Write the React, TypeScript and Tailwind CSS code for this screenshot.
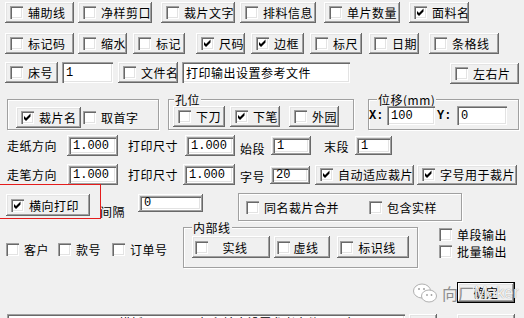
import React from 'react';

// classic win32 bevels
const raised =
  'bg-[#f0f0f0] shadow-[inset_-1px_-1px_0_#696969,inset_1px_1px_0_#ffffff,inset_-2px_-2px_0_#a0a0a0,inset_2px_2px_0_#e3e3e3]';
const sunken =
  'bg-white shadow-[inset_1px_1px_0_#a0a0a0,inset_2px_2px_0_#696969,inset_-1px_-1px_0_#ffffff,inset_-2px_-2px_0_#e3e3e3]';
const mono = "font-['Liberation_Mono',monospace] text-[12px] tracking-normal";

function Box({ checked }: { checked?: boolean }) {
  return (
    <span className={`inline-flex w-[13px] h-[13px] shrink-0 ${sunken}`}>
      {checked && (
        <svg viewBox="0 0 13 13" className="w-[13px] h-[13px]">
          <polygon points="3,5 5,7 9.5,2.5 9.5,5.5 5,10 3,8" fill="#000" />
        </svg>
      )}
    </span>
  );
}

function PushCheck({
  label,
  checked,
  className = '',
  center,
}: {
  label: string;
  checked?: boolean;
  className?: string;
  center?: boolean;
}) {
  return (
    <div className={`flex items-center shrink-0 ${center ? 'pl-[3px] pr-[8px]' : 'pl-[5px]'} ${raised} ${className}`}>
      <Box checked={checked} />
      <span className={center ? 'flex-1 text-center leading-[13px]' : 'ml-[5px] leading-[13px] whitespace-nowrap'}>
        {label}
      </span>
    </div>
  );
}

function Check({ label, checked, className = '' }: { label: string; checked?: boolean; className?: string }) {
  return (
    <div className={`flex items-center shrink-0 h-[13px] ${className}`}>
      <Box checked={checked} />
      <span className="ml-[5px] leading-[13px] whitespace-nowrap">{label}</span>
    </div>
  );
}

function Framed({ value, className = '' }: { value: string; className?: string }) {
  return (
    <div className={`p-[2px] shrink-0 ${raised} ${className}`}>
      <div className={`h-full flex items-center pl-[4px] ${mono} ${sunken}`}>{value}</div>
    </div>
  );
}

function Field({ value, className = '', cjk }: { value: string; className?: string; cjk?: boolean }) {
  return (
    <div className={`flex items-center pl-[4px] shrink-0 overflow-hidden whitespace-nowrap ${cjk ? '' : mono} ${sunken} ${className}`}>
      {value}
    </div>
  );
}

function Label({ text, className = '' }: { text: string; className?: string }) {
  return <span className={`shrink-0 leading-[13px] whitespace-nowrap ${className}`}>{text}</span>;
}

const group = 'border border-[#a0a0a0] shadow-[1px_1px_0_#ffffff,inset_1px_1px_0_#ffffff] shrink-0';
const legend = 'px-[1px] leading-[13px] h-[13px] bg-[#f0f0f0]';

export default function App() {
  return (
    <div className="relative w-[524px] h-[318px] overflow-hidden bg-[#f0f0f0] text-[12px] tracking-[0.5px] text-black font-['Noto_Sans_CJK_SC',sans-serif]">
      {/* row 1 */}
      <div className="flex pt-[2px] pl-[5px]">
        <PushCheck label="辅助线" className="w-[69px] h-[21px]" />
        <PushCheck label="净样剪口" className="ml-[4px] w-[74px] h-[21px]" />
        <PushCheck label="裁片文字" className="ml-[9px] w-[74px] h-[21px]" />
        <PushCheck label="排料信息" className="ml-[5px] w-[76px] h-[21px]" />
        <PushCheck label="单片数量" className="ml-[8px] w-[76px] h-[21px]" />
        <PushCheck label="面料名" checked className="ml-[9px] w-[60px] h-[21px]" />
      </div>

      {/* row 2 */}
      <div className="flex mt-[10px] pl-[5px]">
        <PushCheck label="标记码" className="w-[69px] h-[21px]" />
        <PushCheck label="缩水" className="ml-[4px] w-[49px] h-[21px]" />
        <PushCheck label="标记" className="ml-[6px] w-[52px] h-[21px]" />
        <PushCheck label="尺码" checked className="ml-[11px] w-[49px] h-[21px]" />
        <PushCheck label="边框" checked className="ml-[6px] w-[53px] h-[21px]" />
        <PushCheck label="标尺" className="ml-[6px] w-[52px] h-[21px]" />
        <PushCheck label="日期" className="ml-[7px] w-[50px] h-[21px]" />
        <PushCheck label="条格线" className="ml-[10px] w-[70px] h-[21px]" />
      </div>

      {/* row 3 */}
      <div className="flex items-start mt-[8px] pl-[5px]">
        <PushCheck label="床号" className="w-[53px] h-[21px]" />
        <Field value="1" className="ml-[4px] w-[51px] h-[21px]" />
        <PushCheck label="文件名" className="ml-[5px] w-[60px] h-[21px]" />
        <Field value="打印输出设置参考文件" cjk className="ml-[4px] w-[168px] h-[21px]" />
        <PushCheck label="左右片" className="ml-[100px] mt-[1px] w-[69px] h-[21px]" />
      </div>

      {/* row 4: group boxes */}
      <div className="flex items-start mt-[9px]">
        <div className={`ml-[7px] mt-[6px] w-[152px] h-[31px] ${group}`}>
          <div className="flex items-center pt-[7px] pl-[8px]">
            <PushCheck label="裁片名" checked className="w-[65px] h-[21px]" />
            <Check label="取首字" className="ml-[2px]" />
          </div>
        </div>
        <fieldset className={`ml-[9px] w-[186px] h-[37px] ${group}`}>
          <legend className={`ml-[5px] ${legend}`}>孔位</legend>
          <div className="flex pl-[4px]">
            <PushCheck label="下刀" className="w-[52px] h-[21px]" />
            <PushCheck label="下笔" checked className="ml-[5px] w-[50px] h-[21px]" />
            <PushCheck label="外园" className="ml-[9px] w-[50px] h-[21px]" />
          </div>
        </fieldset>
        <fieldset className={`ml-[14px] w-[151px] h-[37px] ${group}`}>
          <legend className={`ml-[8px] ${legend}`}>位移(mm)</legend>
          <div className="flex items-center">
            <span className={`w-[18px] font-bold ${mono}`}>X:</span>
            <Field value="100" className="w-[48px] h-[19px]" />
            <span className={`ml-[2px] w-[20px] font-bold ${mono}`}>Y:</span>
            <Field value="0" className="w-[50px] h-[19px]" />
          </div>
        </fieldset>
      </div>

      {/* row 5 */}
      <div className="flex items-center mt-[5px] pl-[7px] h-[21px]">
        <Label text="走纸方向" className="w-[60px]" />
        <Framed value="1.000" className="w-[51px] h-[21px]" />
        <Label text="打印尺寸" className="ml-[10px] w-[57px]" />
        <Framed value="1.000" className="w-[50px] h-[21px]" />
        <Label text="始段" className="ml-[5px] w-[31px] mt-[6px]" />
        <Framed value="1" className="w-[40px] h-[19px]" />
        <Label text="末段" className="ml-[13px] w-[31px] mt-[2px]" />
        <Framed value="1" className="w-[37px] h-[19px]" />
      </div>

      {/* row 6 */}
      <div className="flex items-center mt-[8px] pl-[7px] h-[21px]">
        <Label text="走笔方向" className="w-[60px]" />
        <Framed value="1.000" className="w-[51px] h-[21px]" />
        <Label text="打印尺寸" className="ml-[10px] w-[55px]" />
        <Framed value="1.000" className="w-[52px] h-[21px]" />
        <Label text="字号" className="ml-[5px] w-[30px] mt-[4px]" />
        <Framed value="20" className="w-[40px] h-[18px]" />
        <PushCheck label="自动适应裁片" checked className="ml-[5px] w-[99px] h-[20px]" />
        <PushCheck label="字号用于裁片" checked className="ml-[3px] w-[100px] h-[20px]" />
      </div>

      {/* row 7 */}
      <div className="flex items-start mt-[8px]">
        <PushCheck label="横向打印" checked className="ml-[6px] mt-[1px] w-[84px] h-[22px]" />
        <Label text="间隔" className="ml-[10px] mt-[12px] w-[38px]" />
        <Framed value="0" className="mt-[1px] w-[65px] h-[18px]" />
        <div className={`ml-[35px] w-[224px] h-[28px] flex items-center pl-[7px] ${group}`}>
          <Check label="同名裁片合并" />
          <Check label="包含实样" className="ml-[30px]" />
        </div>
      </div>

      {/* row 8 */}
      <div className="flex items-start">
        <div className="w-[183px] shrink-0 flex items-center pl-[6px] mt-[22px]">
          <Check label="客户" />
          <Check label="款号" className="ml-[9px]" />
          <Check label="订单号" className="ml-[11px]" />
        </div>
        <fieldset className={`w-[235px] h-[47px] ${group}`}>
          <legend className={`ml-[8px] ${legend}`}>内部线</legend>
          <div className="flex pt-[2px] pl-[8px]">
            <PushCheck label="实线" center className="w-[78px] h-[22px]" />
            <PushCheck label="虚线" center className="ml-[4px] w-[56px] h-[22px]" />
            <PushCheck label="标识线" center className="ml-[7px] w-[72px] h-[22px]" />
          </div>
        </fieldset>
        <div className="ml-[21px] flex flex-col">
          <Check label="单段输出" className="mt-[7px]" />
          <Check label="批量输出" className="mt-[4px]" />
          <div className="ml-[18px] mt-[24px] w-[58px] h-[21px] border border-black">
            <div className={`h-full flex items-center justify-center ${raised}`}>确定</div>
          </div>
        </div>
      </div>

      {/* bottom strip */}
      <div className="flex mt-[11px] pl-[7px]">
        <div className={`w-[398px] h-[20px] pl-[3px] pt-[2px] whitespace-nowrap overflow-hidden leading-[14px] tracking-normal ${sunken}`}>
          J:\Users\ArtDesign\模板\ZDTM\[1]打印输出设置参考文件，页宽：1600
        </div>
        <div className={`ml-[4px] w-[28px] h-[20px] ${raised}`} />
        <div className={`ml-[20px] w-[58px] h-[20px] ${raised}`} />
      </div>

      {/* red annotation box */}
      <div className="absolute left-[-2px] top-[184px] w-[103px] h-[35px] border-[1.5px] border-[#e41c1c]" />

      {/* watermark */}
      <div className="absolute left-[412px] top-[282px] flex items-center pointer-events-none tracking-normal">
        <svg viewBox="0 0 26 22" className="w-[26px] h-[22px]">
          <ellipse cx="10" cy="9" rx="8.5" ry="7" fill="#fff" stroke="#b0b0b0" strokeWidth="1" />
          <ellipse cx="17" cy="14" rx="7.5" ry="6" fill="#fff" stroke="#b0b0b0" strokeWidth="1" />
          <circle cx="7" cy="7" r="1" fill="#a0a0a0" />
          <circle cx="12" cy="7" r="1" fill="#a0a0a0" />
          <circle cx="15" cy="13" r="0.9" fill="#a0a0a0" />
          <circle cx="19.5" cy="13" r="0.9" fill="#a0a0a0" />
        </svg>
        <span className="ml-[4px] text-[16px] leading-[18px] text-[#8c8c8c]">向厂</span>
        <span className="text-[16px] leading-[18px] text-white/90 [text-shadow:0_0_1px_#707070] font-['Liberation_Sans',sans-serif]">
          Maker
        </span>
      </div>
    </div>
  );
}
